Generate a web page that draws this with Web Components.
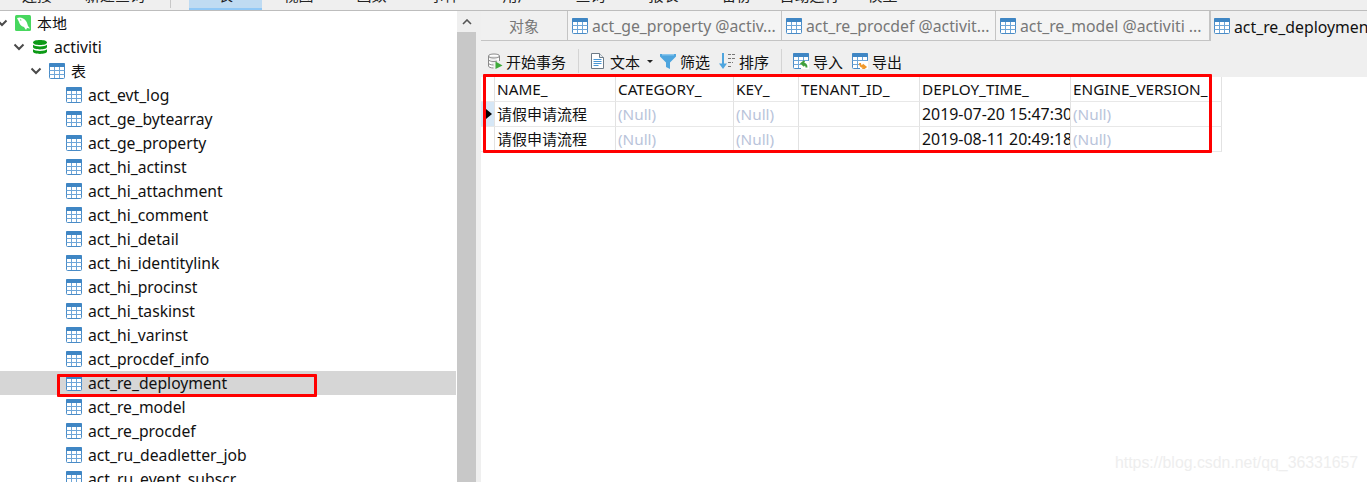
<!DOCTYPE html>
<html lang="zh">
<head>
<meta charset="utf-8">
<title>Navicat</title>
<style>
  html, body { margin: 0; height: 100%; overflow: hidden; background: #fff; }
  body { font: 15px "Noto Sans", "Noto Sans CJK SC", sans-serif; color: #111; }
</style>
</head>
<body>

<app-shell>
  <nav-strip slot="nav">
    <nav-item width="74">连接</nav-item>
    <nav-item width="82">新建查询</nav-item>
    <nav-gap></nav-gap>
    <nav-item width="73" active>表</nav-item>
    <nav-item width="73">视图</nav-item>
    <nav-item width="73">函数</nav-item>
    <nav-item width="73">事件</nav-item>
    <nav-item width="73">用户</nav-item>
    <nav-item width="73">查询</nav-item>
    <nav-item width="73">报表</nav-item>
    <nav-item width="73">备份</nav-item>
    <nav-item width="73">自动运行</nav-item>
    <nav-item width="73">模型</nav-item>
  </nav-strip>

  <tree-panel slot="side">
    <tree-row level="0" icon="mysql" open cjk>本地</tree-row>
    <tree-row level="1" icon="db" open>activiti</tree-row>
    <tree-row level="2" icon="table" open cjk>表</tree-row>
    <tree-row level="3" icon="table">act_evt_log</tree-row>
    <tree-row level="3" icon="table">act_ge_bytearray</tree-row>
    <tree-row level="3" icon="table">act_ge_property</tree-row>
    <tree-row level="3" icon="table">act_hi_actinst</tree-row>
    <tree-row level="3" icon="table">act_hi_attachment</tree-row>
    <tree-row level="3" icon="table">act_hi_comment</tree-row>
    <tree-row level="3" icon="table">act_hi_detail</tree-row>
    <tree-row level="3" icon="table">act_hi_identitylink</tree-row>
    <tree-row level="3" icon="table">act_hi_procinst</tree-row>
    <tree-row level="3" icon="table">act_hi_taskinst</tree-row>
    <tree-row level="3" icon="table">act_hi_varinst</tree-row>
    <tree-row level="3" icon="table">act_procdef_info</tree-row>
    <tree-row level="3" icon="table" selected>act_re_deployment</tree-row>
    <tree-row level="3" icon="table">act_re_model</tree-row>
    <tree-row level="3" icon="table">act_re_procdef</tree-row>
    <tree-row level="3" icon="table">act_ru_deadletter_job</tree-row>
    <tree-row level="3" icon="table">act_ru_event_subscr</tree-row>
  </tree-panel>

  <scroll-bar slot="scroll"></scroll-bar>

  <tab-bar slot="tabs">
    <tab-item width="87" plain>对象</tab-item>
    <tab-item width="214">act_ge_property @activ...</tab-item>
    <tab-item width="214">act_re_procdef @activit...</tab-item>
    <tab-item width="214">act_re_model @activiti ...</tab-item>
    <tab-item active>act_re_deployment @activiti (本地)</tab-item>
  </tab-bar>

  <data-toolbar slot="tools">
    <tool-button icon="begin" gap="3" after="12">开始事务</tool-button>
    <tool-sep></tool-sep>
    <tool-button icon="doc" gap="4" before="11" after="7">文本</tool-button>
    <tool-caret></tool-caret>
    <tool-button icon="filter" gap="4" before="7" after="9">筛选</tool-button>
    <tool-button icon="sort" gap="4" after="12">排序</tool-button>
    <tool-sep></tool-sep>
    <tool-button icon="import" gap="4" before="11" after="9">导入</tool-button>
    <tool-button icon="export" gap="4">导出</tool-button>
  </data-toolbar>

  <data-grid slot="grid">
    <grid-row head>
      <grid-cell marker></grid-cell>
      <grid-cell>NAME_</grid-cell>
      <grid-cell>CATEGORY_</grid-cell>
      <grid-cell>KEY_</grid-cell>
      <grid-cell>TENANT_ID_</grid-cell>
      <grid-cell>DEPLOY_TIME_</grid-cell>
      <grid-cell>ENGINE_VERSION_</grid-cell>
    </grid-row>
    <grid-row>
      <grid-cell marker current></grid-cell>
      <grid-cell cjk>请假申请流程</grid-cell>
      <grid-cell null>(Null)</grid-cell>
      <grid-cell null>(Null)</grid-cell>
      <grid-cell></grid-cell>
      <grid-cell date>2019-07-20 15:47:30</grid-cell>
      <grid-cell null>(Null)</grid-cell>
    </grid-row>
    <grid-row>
      <grid-cell marker></grid-cell>
      <grid-cell cjk>请假申请流程</grid-cell>
      <grid-cell null>(Null)</grid-cell>
      <grid-cell null>(Null)</grid-cell>
      <grid-cell></grid-cell>
      <grid-cell date>2019-08-11 20:49:18</grid-cell>
      <grid-cell null>(Null)</grid-cell>
    </grid-row>
  </data-grid>

  <!-- red annotation boxes drawn over the screenshot -->
  <red-mark slot="marks" style="left:57px;top:374px;width:254px;height:17px"></red-mark>
  <red-mark slot="marks" style="left:483px;top:74px;width:723px;height:73px"></red-mark>
  <water-mark slot="marks">https://blog.csdn.net/qq_36331657</water-mark>
</app-shell>

<script>
// every icon the page uses, drawn on a 16x16 box
const tableParts = `
  <rect x=".5" y=".5" width="15" height="15" rx="1" fill="#fff" stroke="#4a8cc7"/>
  <rect x="0" y="0" width="16" height="4" rx="1" fill="#3f86c4"/>
  <path d="M.5 7.500h15M.5 11.500h15M5.500 4v11M10.500 4v11" stroke="#6ea6d8" fill="none"/>`;

const ICONS = {
  table: tableParts,
  mysql: `
    <rect width="16" height="16" rx="1.500" fill="#47d75e"/>
    <path d="M2 3C5 1.500 9 3 11 6c1.500 2 1.500 4 2 5l2 2.500-3-.5-1 2-2-3C6 11.500 4.500 9 4 7 3.500 5.500 2.500 4.500 2 3z" fill="#fff"/>
    <path d="M5 4.800l1.300.3" stroke="#47d75e" fill="none"/>`,
  db: `
    <path d="M1 3.500C1 1.800 4.100 1 8 1s7 .8 7 2.500S11.900 6 8 6 1 5.200 1 3.500z" fill="#0c9a16"/>
    <path d="M1 5.800C2.200 7 5 7.500 8 7.500s5.800-.5 7-1.700V8c0 1.500-3.100 2.400-7 2.400S1 9.500 1 8z" fill="#0c9a16"/>
    <path d="M1 10.300c1.200 1.200 4 1.700 7 1.700s5.800-.5 7-1.700v2.300c0 1.500-3.100 2.400-7 2.400s-7-.9-7-2.400z" fill="#0c9a16"/>`,
  begin: `
    <path d="M1.500 3C1.500 1.700 4 1 7 1s5.500.7 5.500 2v5M1.500 3v10c0 1.200 2.200 1.900 5 2M1.500 3c0 1.300 2.500 2 5.500 2s5.500-.7 5.500-2M1.500 6.500c0 1.300 2.500 2 5.500 2 1.100 0 2-.1 3-.3M1.500 10c0 1.200 2 1.900 5 2" fill="#fff" stroke="#8a8a8a"/>
    <path d="M8.500 8.500l7 4-7 3.500z" fill="#3eaa3a"/>`,
  doc: `
    <path d="M1.500.5h8l4 4v11h-12z" fill="#fff" stroke="#6d7a86"/>
    <path d="M9.500.5v4h4" fill="#e4e9ee" stroke="#6d7a86"/>
    <path d="M3.500 6.500h8M3.500 8.500h8M3.500 10.500h8M3.500 12.500h5" stroke="#4a97d4" fill="none"/>`,
  filter: `
    <path d="M0 1h16v2.500L10 9.500V16l-4-2V9.500L0 3.500z" fill="#4ea5de"/>
    <path d="M2 1.800h12" stroke="#a7d5f2" fill="none"/>`,
  sort: `
    <path d="M3 0h2v10.500h3L4 16 0 10.500h3z" fill="#4ea5de"/>
    <path d="M9 1.500h7M9 5.500h7M9 9.500h5M9 13.500h3" stroke="#777" fill="none" stroke-dasharray="3 1"/>`,
  import: `
    ${tableParts}
    <rect x="8" y="8" width="8" height="8" fill="#fff"/>
    <path d="M13.500 14.500c0-3-1.500-4-4-4M11.500 8l-3 2.500 3 2.500" fill="none" stroke="#3f9f3c" stroke-width="2"/>`,
  export: `
    ${tableParts}
    <rect x="8" y="8" width="8" height="8" fill="#fff"/>
    <path d="M8 10c0 3 1.500 4 4 4M10.500 11.500l3 2.500-3 2.500" fill="none" stroke="#f0982a" stroke-width="2"/>`
};

function iconSvg(name) {
  return `<svg viewBox="0 0 16 16" width="16" height="16" style="display:block;flex:none">${ICONS[name] || ''}</svg>`;
}

// small helper so each class below is just its markup
function define(tag, html) {
  customElements.define(tag, class extends HTMLElement {
    constructor() {
      super();
      this.attachShadow({ mode: 'open' });
    }
    connectedCallback() {
      // attributes are only there once parsed, so render here
      if (!this.shadowRoot.innerHTML) {
        this.shadowRoot.innerHTML = typeof html === 'function' ? html(this) : html;
      }
    }
  });
}

define('app-shell', `
  <style>
    :host { display: grid; width: 1367px; height: 482px; overflow: hidden; position: relative;
      grid-template-columns: 456px 25px 1fr; grid-template-rows: auto auto 36px 1fr; }
    .nav { grid-column: 1 / -1; }
    .side { grid-row: 2 / 5; overflow: hidden; min-width: 0; }
    .scroll { grid-row: 2 / 5; grid-column: 2; }
    .tabs { grid-row: 2; grid-column: 3; min-width: 0; overflow: hidden; }
    .tools { grid-row: 3; grid-column: 3; }
    .grid { grid-row: 4; grid-column: 3; }
  </style>
  <div class="nav"><slot name="nav"></slot></div>
  <div class="side"><slot name="side"></slot></div>
  <div class="scroll"><slot name="scroll"></slot></div>
  <div class="tabs"><slot name="tabs"></slot></div>
  <div class="tools"><slot name="tools"></slot></div>
  <div class="grid"><slot name="grid"></slot></div>
  <slot name="marks"></slot>
`);

define('nav-strip', `
  <style>
    :host { display: flex; height: 10px; overflow: hidden; background: #efefef;
      border-bottom: 1px solid #bdbdbd; }
  </style>
  <slot></slot>
`);

define('nav-item', el => `
  <style>
    :host { display: flex; flex: none; width: ${el.getAttribute('width')}px; height: 8px;
      justify-content: center; align-items: flex-end; box-sizing: content-box; }
    :host([active]) { background: #bfdbf2; border-bottom: 2px solid #90c8f6; }
    span { display: block; line-height: 20px; height: 20px; flex: none; margin-bottom: 3px; white-space: nowrap; color: #222; }
  </style>
  <span><slot></slot></span>
`);

define('nav-gap', `
  <style>
    :host { display: block; flex: none; width: 33px; height: 8px; }
    i { display: block; margin-left: 14px; width: 1px; height: 8px; background: #c8c8c8; }
  </style>
  <i></i>
`);

define('tree-panel', `
  <style>:host { display: block; background: #fff; }</style>
  <slot></slot>
`);

define('tree-row', el => {
  const indent = 15 + Number(el.getAttribute('level')) * 17;
  const chevron = el.hasAttribute('open')
    ? `<svg class="chev" viewBox="0 0 12 8" width="12" height="8"><path d="M1.500 1.500L6 6l4.500-4.500" fill="none" stroke="#4a4a4a" stroke-width="2"/></svg>`
    : '';
  return `
  <style>
    :host { display: flex; align-items: center; height: 24px; white-space: nowrap; font-size: 15.7px; }
    :host([cjk]) { font-size: 15px; }
    :host([selected]) { background: #d6d6d6; }
    .chev { flex: none; margin-left: ${indent - 19}px; margin-right: 7px; }
    .box { margin-left: ${el.hasAttribute('open') ? 0 : indent}px; margin-right: 6px; flex: none; }
    .label { line-height: 24px; }
  </style>
  ${chevron}
  <div class="box">${iconSvg(el.getAttribute('icon'))}</div>
  <span class="label"><slot></slot></span>`;
});

define('scroll-bar', `
  <style>
    :host { display: block; height: 100%; background: #fff; padding-left: 1px; box-sizing: border-box; }
    .inner { display: flex; flex-direction: column; height: 100%; width: 24px; background: #efefef; }
    .up { display: flex; align-items: center; justify-content: center; flex: none; width: 19px; height: 21px; }
    .track { flex: 1; width: 19px; background: #c8c8c8; }
  </style>
  <div class="inner">
    <div class="up"><svg viewBox="0 0 10 6" width="10" height="6"><path d="M1 5l4-4 4 4" fill="none" stroke="#555" stroke-width="1.600"/></svg></div>
    <div class="track"></div>
  </div>
`);

define('tab-bar', `
  <style>
    :host { display: flex; height: 30px; overflow: hidden; background: #efefef; }
  </style>
  <slot></slot>
`);

define('tab-item', el => {
  const w = el.getAttribute('width');
  const plain = el.hasAttribute('plain');
  return `
  <style>
    :host { display: flex; flex: ${w ? 'none' : '1 0 auto'}; ${w ? `width:${w}px;` : ''} height: 30px;
      box-sizing: border-box; align-items: center; gap: 4px; white-space: nowrap; overflow: hidden;
      padding-left: ${plain ? 0 : 4}px; background: #f4f4f4; color: #777; font-size: 15.8px;
      border-bottom: 1px solid #c4c4c4; }
    :host([plain]) { justify-content: center; background: #f0f0f0; border-right: 1px solid #c4c4c4; font-size: 15px; }
    :host([active]) { background: #efefef; color: #111; border-bottom: 0; border-left: 1px solid #c4c4c4; padding-left: 3px; }
    :host(:not([plain]):not([active])) { border-right: 1px solid #c4c4c4; }
  </style>
  ${plain ? '' : iconSvg('table')}
  <span><slot></slot></span>`;
});

define('data-toolbar', `
  <style>
    :host { display: flex; align-items: center; height: 36px; padding-left: 6px; padding-top: 4px;
      box-sizing: border-box; background: #efefef; white-space: nowrap; }
  </style>
  <slot></slot>
`);

define('tool-button', el => `
  <style>
    :host { display: flex; flex: none; align-items: center; gap: ${el.getAttribute('gap') || 4}px;
      margin-left: ${el.getAttribute('before') || 0}px; margin-right: ${el.getAttribute('after') || 0}px; }
  </style>
  ${iconSvg(el.getAttribute('icon'))}
  <span><slot></slot></span>
`);

define('tool-sep', `
  <style>:host { display: block; flex: none; width: 1px; height: 24px; background: #d4d4d4; }</style>
`);

define('tool-caret', `
  <style>
    :host { display: block; flex: none; width: 0; height: 0; border: 3px solid transparent;
      border-top: 3px solid #222; border-bottom: 0; }
  </style>
`);

define('data-grid', `
  <style>
    :host { display: block; --cols: 14px 121px 118px 65px 121px 151px 151px; background: #fff; }
  </style>
  <slot></slot>
`);

define('grid-row', `
  <style>
    :host { display: grid; grid-template-columns: var(--cols); width: 741px; height: 25px; }
  </style>
  <slot></slot>
`);

define('grid-cell', `
  <style>
    :host { display: block; box-sizing: border-box; height: 25px; padding-left: 2px; overflow: hidden;
      white-space: nowrap; line-height: 24px; font-size: 15.3px;
      border-right: 1px solid #e2e2e2; border-bottom: 1px solid #e8e8e8; }
    :host([cjk]) { font-size: 15px; }
    :host([date]) { font-size: 15.9px; }
    :host([null]) { color: #b9c4da; }
    :host([marker]) { padding: 0; position: relative; background: #fff; }
    :host([current]) { background: #d6e7f6; }
    :host([current])::after { content: ""; position: absolute; left: 5px; top: 7px; width: 0; height: 0;
      border: 5px solid transparent; border-left: 6px solid #000; border-right: 0; }
  </style>
  <slot></slot>
`);

define('red-mark', `
  <style>
    :host { display: block; position: absolute; border: 3px solid #f00; border-radius: 1px; pointer-events: none; }
  </style>
`);

define('water-mark', `
  <style>
    :host { display: block; position: absolute; left: 1115px; top: 452px; white-space: nowrap;
      font: 15.85px/22px "Liberation Sans", sans-serif; color: #eeeeee; }
  </style>
  <slot></slot>
`);
</script>
</body>
</html>
